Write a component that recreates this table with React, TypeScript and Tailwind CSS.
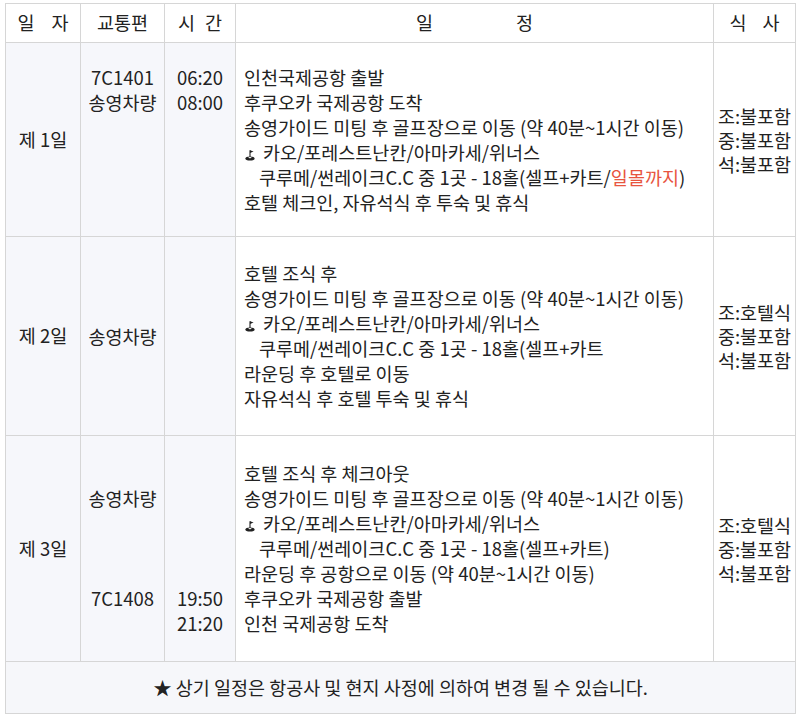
import React from "react";

const GolfIcon = () => (
  <svg viewBox="0 0 12 12" className="inline-block h-[12px] w-[12px] mr-[7px] align-[-1px]">
    <path d="M6 1.2 L6 8" stroke="#222" strokeWidth="1.1" />
    <path d="M6 1.2 L9.6 2.6 L6 4 Z" fill="#222" />
    <ellipse cx="6" cy="9.4" rx="4.6" ry="2" fill="#222" />
    <ellipse cx="6" cy="8.6" rx="1.6" ry="0.7" fill="#fff" />
  </svg>
);

type Line = React.ReactNode;

const Lines = ({ lines, className = "" }: { lines: Line[]; className?: string }) => (
  <div className={className}>
    {lines.map((l, i) => (
      <div key={i} className="h-[25px] leading-[25px] whitespace-pre">
        {l === "" ? "\u00a0" : l}
      </div>
    ))}
  </div>
);

const rows = [
  {
    day: "제 1일",
    h: "h-[194px]",
    transport: ["7C1401", "송영차량", "", "", "", ""],
    time: ["06:20", "08:00", "", "", "", ""],
    schedule: [
      "인천국제공항 출발",
      "후쿠오카 국제공항 도착",
      "송영가이드 미팅 후 골프장으로 이동 (약 40분~1시간 이동)",
      <>
        <GolfIcon />카오/포레스트난칸/아마카세/위너스
      </>,
      <span className="pl-[15px]">
        쿠루메/썬레이크C.C 중 1곳 - 18홀(셀프+카트/
        <span className="text-[#e8553f]">일몰까지</span>)
      </span>,
      "호텔 체크인, 자유석식 후 투숙 및 휴식",
    ],
    meals: ["조:불포함", "중:불포함", "석:불포함"],
  },
  {
    day: "제 2일",
    h: "h-[199px]",
    transport: ["송영차량"],
    time: [""],
    schedule: [
      "호텔 조식 후",
      "송영가이드 미팅 후 골프장으로 이동 (약 40분~1시간 이동)",
      <>
        <GolfIcon />카오/포레스트난칸/아마카세/위너스
      </>,
      <span className="pl-[15px]">쿠루메/썬레이크C.C 중 1곳 - 18홀(셀프+카트</span>,
      "라운딩 후 호텔로 이동",
      "자유석식 후 호텔 투숙 및 휴식",
    ],
    meals: ["조:호텔식", "중:불포함", "석:불포함"],
  },
  {
    day: "제 3일",
    h: "h-[226px]",
    transport: ["", "송영차량", "", "", "", "7C1408", ""],
    time: ["", "", "", "", "", "19:50", "21:20"],
    schedule: [
      "호텔 조식 후 체크아웃",
      "송영가이드 미팅 후 골프장으로 이동 (약 40분~1시간 이동)",
      <>
        <GolfIcon />카오/포레스트난칸/아마카세/위너스
      </>,
      <span className="pl-[15px]">쿠루메/썬레이크C.C 중 1곳 - 18홀(셀프+카트)</span>,
      "라운딩 후 공항으로 이동 (약 40분~1시간 이동)",
      "후쿠오카 국제공항 출발",
      "인천 국제공항 도착",
    ],
    meals: ["조:호텔식", "중:불포함", "석:불포함"],
  },
];

const cell = "border-r border-b border-[#d6d6d6] flex items-center";

export default function App() {
  return (
    <div className="w-[800px] h-[717px] bg-white pt-[3px] pl-[5px] font-['Noto_Sans_CJK_KR','Noto_Sans',sans-serif]">
      <div className="w-[791px] grid grid-cols-[75px_84px_71px_478px_82px] border-l border-t border-[#d6d6d6] text-[18.5px] text-[#222]">
        {/* header */}
        <div className={`${cell} h-[39px] justify-center gap-[17px]`}>
          <span>일</span>
          <span>자</span>
        </div>
        <div className={`${cell} h-[39px] justify-center`}>교통편</div>
        <div className={`${cell} h-[39px] justify-center gap-[10px]`}>
          <span>시</span>
          <span>간</span>
        </div>
        <div className={`${cell} h-[39px] justify-center gap-[83px]`}>
          <span>일</span>
          <span>정</span>
        </div>
        <div className={`${cell} h-[39px] justify-center gap-[16px]`}>
          <span>식</span>
          <span>사</span>
        </div>

        {rows.map((r) => (
          <React.Fragment key={r.day}>
            <div className={`${cell} ${r.h} justify-center bg-[#f6f7fb]`}>{r.day}</div>
            <div className={`${cell} ${r.h} justify-center bg-[#f6f7fb]`}>
              <Lines lines={r.transport} className="text-center" />
            </div>
            <div className={`${cell} ${r.h} justify-center bg-[#f6f7fb]`}>
              <Lines lines={r.time} className="text-center" />
            </div>
            <div className={`${cell} ${r.h} pl-[8px]`}>
              <Lines lines={r.schedule} />
            </div>
            <div className={`${cell} ${r.h} justify-center`}>
              <div>
                {r.meals.map((m) => (
                  <div key={m} className="leading-[24px]">
                    {m}
                  </div>
                ))}
              </div>
            </div>
          </React.Fragment>
        ))}

        {/* footer */}
        <div className={`${cell} col-span-5 h-[52px] justify-center bg-[#f6f7fa]`}>
          ★ 상기 일정은 항공사 및 현지 사정에 의하여 변경 될 수 있습니다.
        </div>
      </div>
    </div>
  );
}
